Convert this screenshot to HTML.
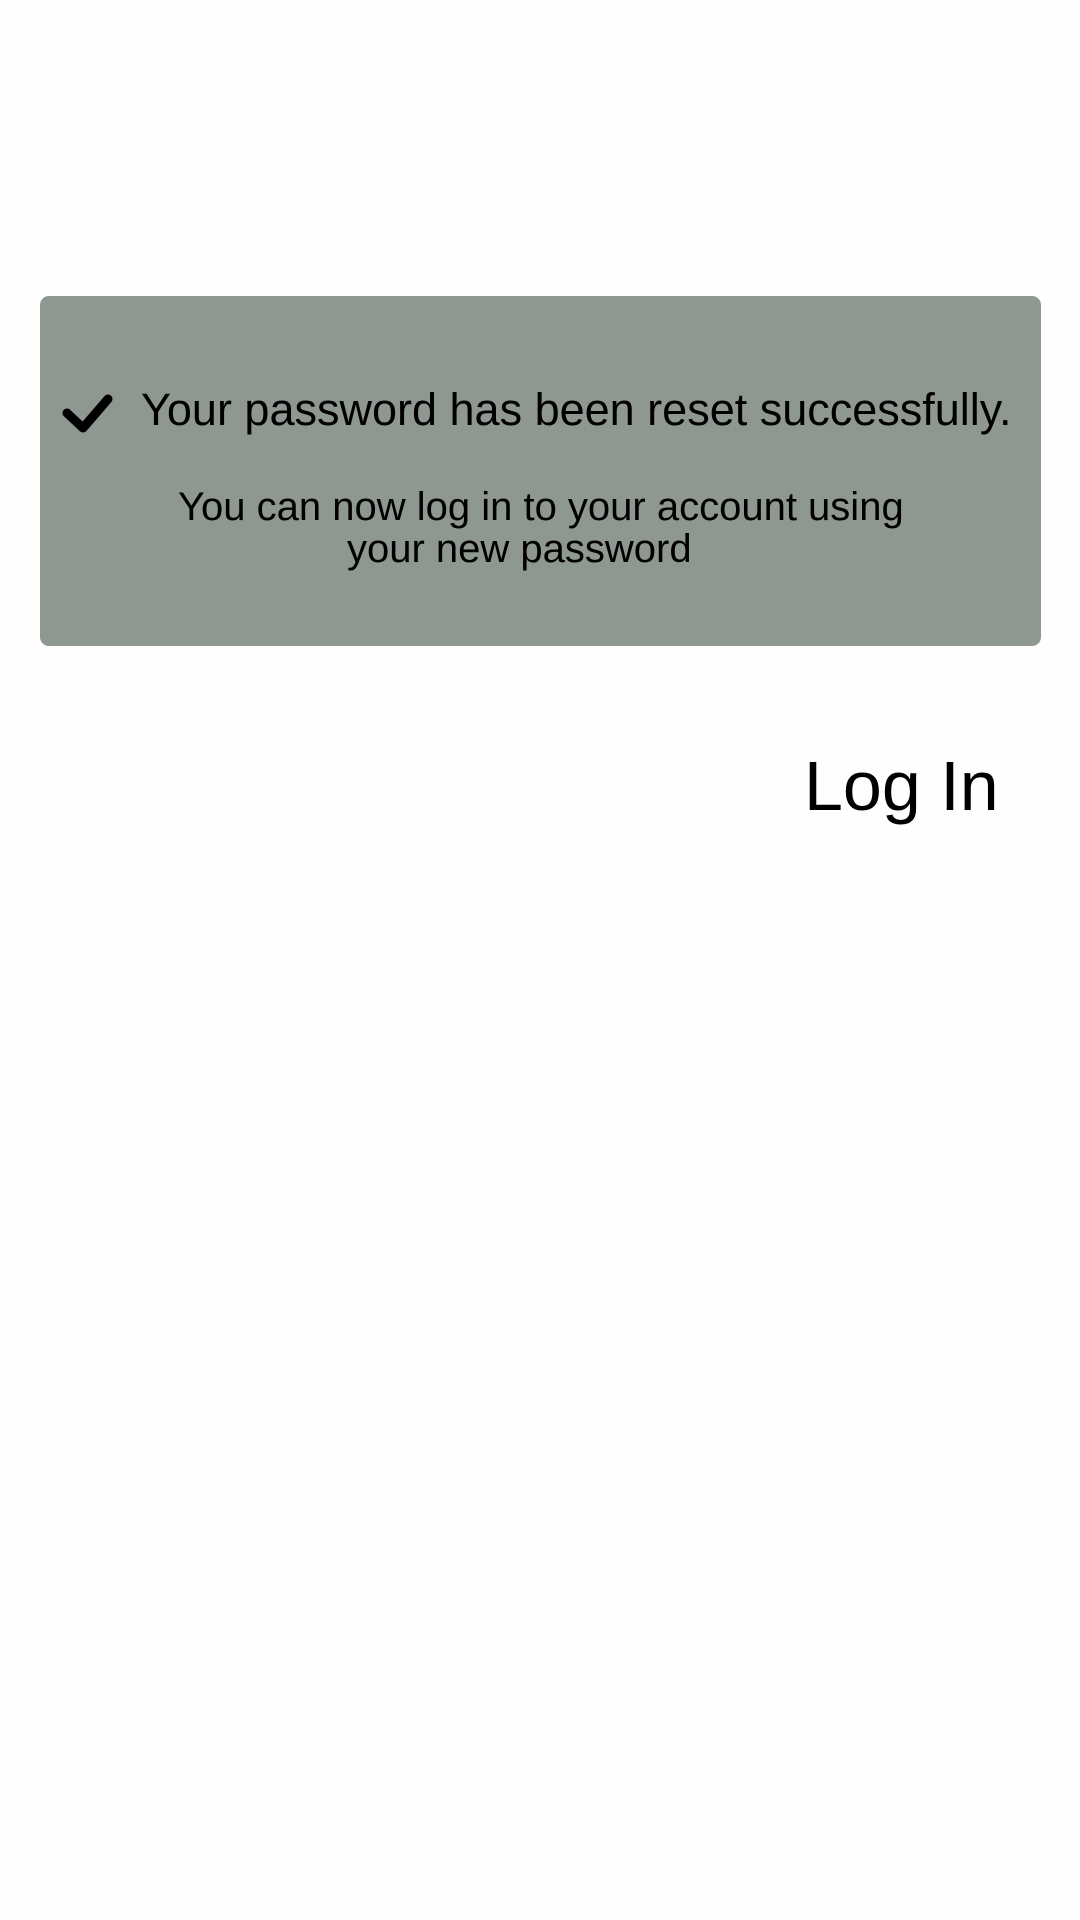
<!DOCTYPE html>
<html><head><meta charset="utf-8"><style>
html,body{margin:0;padding:0;background:#fefefe;width:1080px;height:1920px;overflow:hidden;font-family:"Liberation Sans",Arial,sans-serif;color:#000}
.box{position:absolute;left:40px;top:296px;width:1001px;height:350px;background:#8f9791;border-radius:9px}
.t{position:absolute;line-height:1;white-space:nowrap}
</style></head><body>
<div class="box"></div>
<svg style="position:absolute;left:0;top:0" width="1080" height="700"><path d="M67 413 L83 428 L108 399" fill="none" stroke="#000" stroke-width="9" stroke-linecap="round" stroke-linejoin="round"/></svg>
<div class="t" style="left:141px;top:387px;font-size:45px">Your password has been reset successfully.</div>
<div class="t" style="left:178px;top:487px;font-size:40px">You can now log in to your account using</div>
<div class="t" style="left:347px;top:529px;font-size:40px">your new password</div>
<div class="t" style="left:804px;top:751px;font-size:70px">Log In</div>
</body></html>
